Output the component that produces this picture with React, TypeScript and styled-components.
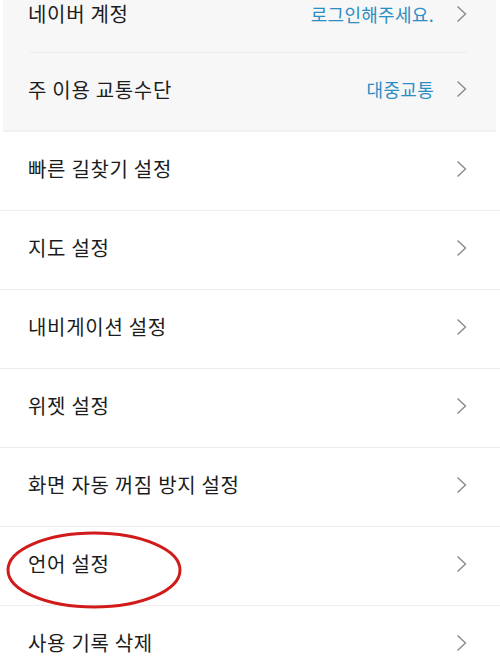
import styled, { createGlobalStyle } from 'styled-components'

const GlobalStyle = createGlobalStyle`
	html, body {
		margin: 0;
		padding: 0;
		background: #ffffff;
		overflow: hidden;
	}
	body {
		font-family: "Noto Sans CJK KR", "Noto Sans", sans-serif;
		color: #1e1e1e;
	}
`

const Page = styled.div`
	position: relative;
	width: 500px;
	height: 667px;
	overflow: hidden;
`

const List = styled.div`
	margin-top: -20px;
	display: flex;
	flex-direction: column;
`

const Panel = styled.div`
	margin: 0 4px 0 3px;
	background: #f7f7f7;
	border-bottom: 2px solid #f1f1f1;
`

const Row = styled.div<{ $inset?: boolean; $h?: number }>`
	box-sizing: content-box;
	height: ${(p) => (p.$h ?? 78) - 5}px;
	display: flex;
	align-items: center;
	padding: 0 33px 5px 28px;
	border-bottom: ${(p) => (p.$inset ? 'none' : '1px solid #ededed')};

	${(p) =>
		p.$inset &&
		`
		padding: 0 29px 5px 25px;
	`}
`

const InsetDivider = styled.div`
	height: 1px;
	margin: 0 29px 0 27px;
	background: #ebebeb;
`

const Label = styled.span`
	flex: 1;
	font-size: 20px;
	letter-spacing: 0.7px;
	color: #1c1c1c;
`

const Value = styled.span`
	font-size: 18px;
	color: #2b8ec4;
	margin-right: 22px;
	letter-spacing: 0.3px;
`

const Chevron = styled.svg`
	width: 11px;
	height: 18px;
	flex-shrink: 0;
`

const Circle = styled.svg`
	position: absolute;
	left: 5px;
	top: 530px;
	width: 180px;
	height: 82px;
	pointer-events: none;
`

function Arrow() {
	return (
		<Chevron viewBox="0 0 11 18">
			<path d="M1.5 1.5 L9.5 9 L1.5 16.5" fill="none" stroke="#8a8a8a" strokeWidth="1.4" />
		</Chevron>
	)
}

const items = [
	'빠른 길찾기 설정',
	'지도 설정',
	'내비게이션 설정',
	'위젯 설정',
	'화면 자동 꺼짐 방지 설정',
	'언어 설정',
	'사용 기록 삭제',
]

export default function App() {
	return (
		<Page>
			<GlobalStyle />
			<List>
				<Panel>
					<Row $inset $h={72}>
						<Label>네이버 계정</Label>
						<Value>로그인해주세요.</Value>
						<Arrow />
					</Row>
					<InsetDivider />
					<Row $inset $h={77}>
						<Label>주 이용 교통수단</Label>
						<Value>대중교통</Value>
						<Arrow />
					</Row>
				</Panel>
				{items.map((t) => (
					<Row key={t}>
						<Label>{t}</Label>
						<Arrow />
					</Row>
				))}
			</List>
			<Circle viewBox="0 0 180 82">
				<ellipse cx="89" cy="40" rx="86" ry="37" fill="none" stroke="#d11a1a" strokeWidth="3" />
			</Circle>
		</Page>
	)
}
